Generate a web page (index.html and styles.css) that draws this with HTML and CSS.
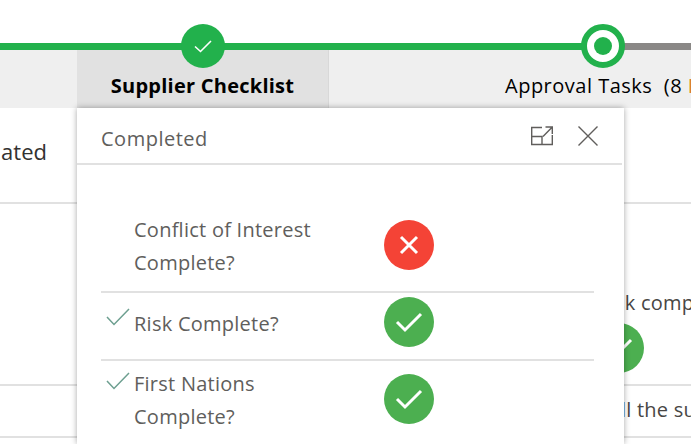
FILE: index.html
```html
<!DOCTYPE html>
<html>
<head>
    <title>Supplier Checklist</title>
    <meta charset="utf-8">
    <link rel="stylesheet" href="styles.css">
</head>
<body>
    <!-- Progress line with the tabs under it -->
    <div class="track">
        <div class="track-done"></div>
        <div class="track-todo"></div>
    </div>
    <nav class="tabs">
        <div class="tab-spacer"></div>
        <div class="tab tab-active">
            <span class="step step-done">
                <svg width="20" height="16" viewBox="0 0 20 16"><path d="M2 8.5 L7.5 13.5 L18 3" fill="none" stroke="#fff" stroke-width="1.6"/></svg>
            </span>
            Supplier Checklist
        </div>
        <div class="tab tab-current">
            <span class="step step-current"><span class="step-dot"></span></span>
            Approval Tasks&nbsp; (8 <span class="pending">Pending)</span>
        </div>
    </nav>

    <!-- Table behind the popup -->
    <main class="content">
        <div class="row-back row-back-first">
            <div class="back-left">Status Updated</div>
        </div>
        <div class="row-back row-back-second">
            <div class="back-right">
                <span class="back-text">Risk complete</span>
                <span class="badge badge-ok">
                    <svg width="28" height="22" viewBox="0 0 28 22"><path d="M2 11 L10 19 L26 3" fill="none" stroke="#fff" stroke-width="3"/></svg>
                </span>
            </div>
        </div>
        <div class="row-back row-back-third">
            <div class="back-right back-right-short"><span class="back-text">All the suppliers</span></div>
        </div>
    </main>

    <!-- Popup -->
    <section class="panel">
        <header class="panel-head">
            <span class="panel-title">Completed</span>
            <svg class="panel-icon" width="22" height="20" viewBox="0 0 22 20">
                <path d="M11 1.5 H0.7 V18.5 H21.3 V9 M0.7 10.5 H11 V18.5 M12 10.5 L21.3 1 M14.5 1 H21.3 V8" fill="none" stroke="#605e5c" stroke-width="1.4"/>
            </svg>
            <svg class="panel-icon" width="20" height="20" viewBox="0 0 20 20">
                <path d="M0.5 0.5 L19.5 19.5 M19.5 0.5 L0.5 19.5" fill="none" stroke="#605e5c" stroke-width="1.4"/>
            </svg>
        </header>
        <div class="panel-body">
            <div class="check-row">
                <div class="tick"></div>
                <div class="check-label">Conflict of Interest<br>Complete?</div>
                <span class="badge badge-bad">
                    <svg width="20" height="20" viewBox="0 0 20 20"><path d="M2 2 L18 18 M18 2 L2 18" fill="none" stroke="#fff" stroke-width="3"/></svg>
                </span>
            </div>
            <div class="check-row check-row-single">
                <div class="tick">
                    <svg width="24" height="18" viewBox="0 0 24 18"><path d="M1 9 L8 16.5 L23 1" fill="none" stroke="#6d9f90" stroke-width="1.5"/></svg>
                </div>
                <div class="check-label">Risk Complete?</div>
                <span class="badge badge-ok">
                    <svg width="28" height="22" viewBox="0 0 28 22"><path d="M2 11 L10 19 L26 3" fill="none" stroke="#fff" stroke-width="3"/></svg>
                </span>
            </div>
            <div class="check-row">
                <div class="tick">
                    <svg width="24" height="18" viewBox="0 0 24 18"><path d="M1 9 L8 16.5 L23 1" fill="none" stroke="#6d9f90" stroke-width="1.5"/></svg>
                </div>
                <div class="check-label">First Nations<br>Complete?</div>
                <span class="badge badge-ok">
                    <svg width="28" height="22" viewBox="0 0 28 22"><path d="M2 11 L10 19 L26 3" fill="none" stroke="#fff" stroke-width="3"/></svg>
                </span>
            </div>
        </div>
    </section>
</body>
</html>
```

FILE: styles.css
```css
html, body {
    margin: 0;
    padding: 0;
    height: 444px;
    overflow: hidden;
    background: #fff;
    font-family: "Open Sans", "Noto Sans", sans-serif;
    color: #323130;
}

/* progress line */
.track {
    display: flex;
    margin-top: 43px;
    height: 7px;
}
.track-done {
    width: 603px;
    background: #22b14c;
}
.track-todo {
    flex: 1;
    background: #8a8886;
}

/* tabs */
.tabs {
    display: flex;
    height: 58px;
    background: #efefef;
}
.tab-spacer {
    width: 77px;
    flex: none;
}
.tab {
    position: relative;
    flex: none;
    white-space: nowrap;
    font-size: 20px;
    line-height: 27px;
    padding-top: 22px;
    box-sizing: border-box;
    color: #000;
}
.tab-active {
    width: 252px;
    text-align: center;
    background: #e1e1e1;
    font-weight: 700;
    letter-spacing: 0.25px;
    border-right: 1px solid #d8d8d8;
}
.tab-current {
    width: 548px;
    padding-left: 176px;
    letter-spacing: 0.5px;
}
.pending {
    color: #d9822b;
}
.step {
    position: absolute;
    top: -26px;
    left: 50%;
    margin-left: -22px;
    width: 44px;
    height: 44px;
    box-sizing: border-box;
    border-radius: 50%;
    display: flex;
    align-items: center;
    justify-content: center;
}
.step-done {
    background: #22b14c;
}
.step-current {
    background: #fff;
    border: 6px solid #22b14c;
}
.step-dot {
    width: 18px;
    height: 18px;
    border-radius: 50%;
    background: #22b14c;
}

/* table behind the popup */
.content {
    font-size: 22px;
}
.row-back {
    display: flex;
    box-sizing: border-box;
    border-bottom: 2px solid #e1e1e1;
}
.row-back-first {
    height: 96px;
    padding-top: 28px;
}
.row-back-second {
    height: 182px;
    justify-content: flex-end;
    padding-top: 85px;
}
.row-back-third {
    height: 52px;
    justify-content: flex-end;
    padding-top: 10px;
}
.back-left {
    width: 47px;
    display: flex;
    justify-content: flex-end;
    overflow: hidden;
    white-space: nowrap;
    color: #323130;
}
.back-right {
    width: 94px;
    display: flex;
    flex-direction: column;
    white-space: nowrap;
}
.back-right-short {
    width: 83px;
}
.back-text {
    font-size: 20px;
    line-height: 27px;
    letter-spacing: 0.25px;
    color: #484644;
}
.back-right .badge {
    margin: 7px 0 0 -3px;
}

/* popup */
.panel {
    position: absolute;
    left: 77px;
    top: 108px;
    width: 547px;
    height: 336px;
    background: #fff;
    box-shadow: 0 0 6px rgba(0, 0, 0, 0.35);
}
.panel-head {
    display: flex;
    align-items: center;
    height: 55px;
    padding: 0 24px 0 24px;
    margin-right: 2px;
    border-bottom: 2px solid #e1e1e1;
    gap: 25px;
}
.panel-title {
    flex: 1;
    padding-top: 6px;
    font-size: 20px;
    color: #605e5c;
    letter-spacing: 0.5px;
}
.panel-body {
    padding: 43px 30px 0 24px;
}
.check-row {
    display: flex;
    align-items: center;
    padding: 5px 0 12px;
    border-bottom: 2px solid #e1e1e1;
}
.check-row-single {
    height: 68px;
    box-sizing: border-box;
    padding: 0 0 6px;
}
.check-row:last-child {
    border-bottom: 0;
    padding-top: 6px;
}
.tick {
    flex: none;
    align-self: flex-start;
    width: 33px;
    padding: 5px 0 0 5px;
    box-sizing: border-box;
}
.check-row-single .tick {
    align-self: center;
    padding-top: 0;
    margin-bottom: 8px;
}
.check-label {
    flex: none;
    width: 250px;
    font-size: 20px;
    line-height: 33px;
    color: #605e5c;
    letter-spacing: 0.25px;
}
.badge {
    flex: none;
    width: 50px;
    height: 50px;
    border-radius: 50%;
    display: flex;
    align-items: center;
    justify-content: center;
    margin-bottom: 2px;
}
.badge-ok {
    background: #4caf50;
}
.badge-bad {
    background: #f44336;
}
```
